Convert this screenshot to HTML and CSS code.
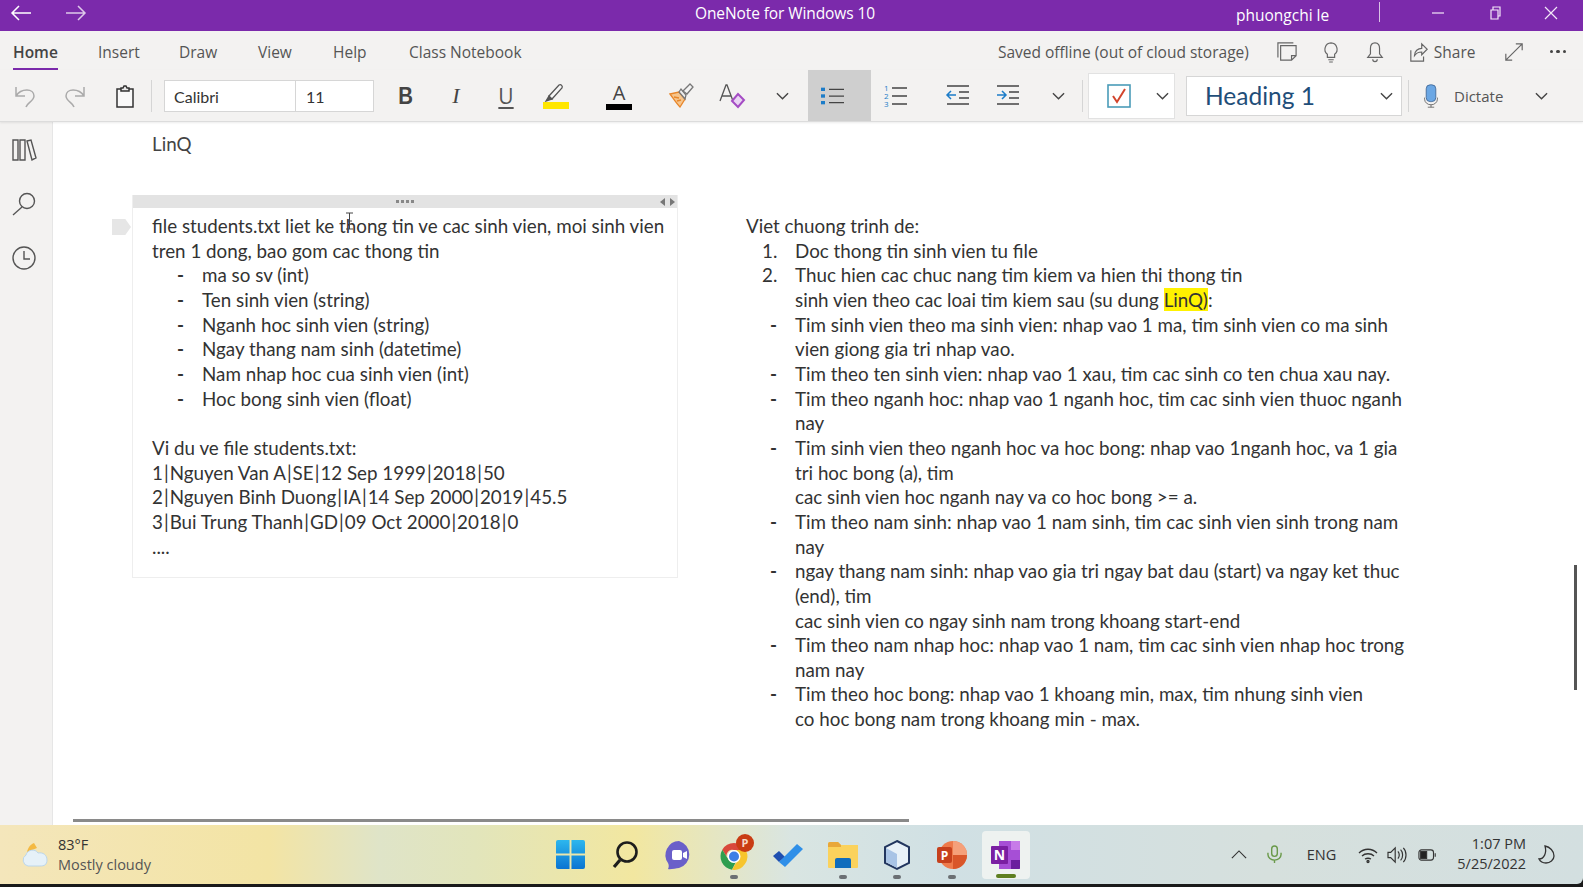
FILE: index.html
```html
<!DOCTYPE html>
<html lang="en">
<head>
<meta charset="utf-8">
<title>OneNote for Windows 10</title>
<link rel="stylesheet" href="styles.css">
</head>
<body>
<div class="app">
  <header class="titlebar">
    <div class="nav">
      <svg class="ic-nav" viewBox="0 0 22 16"><path d="M21 8H2M9 1 2 8l7 7"/></svg>
      <svg class="ic-nav dim" viewBox="0 0 22 16"><path d="M1 8h19M13 1l7 7-7 7"/></svg>
    </div>
    <div class="app-title">OneNote for Windows 10</div>
    <div class="user">phuongchi le</div>
    <div class="title-sep"></div>
    <div class="win-btns">
      <svg class="ic-win" viewBox="0 0 14 14"><path d="M1 7h12"/></svg>
      <svg class="ic-win" viewBox="0 0 14 14"><path d="M3 4h7v9H3zM5 4V1h7v9h-2"/></svg>
      <svg class="ic-win" viewBox="0 0 14 14"><path d="m1 1 12 12M13 1 1 13"/></svg>
    </div>
  </header>

  <nav class="tabrow">
    <a class="tab tab-home">Home</a>
    <a class="tab tab-insert">Insert</a>
    <a class="tab tab-draw">Draw</a>
    <a class="tab tab-view">View</a>
    <a class="tab tab-help">Help</a>
    <a class="tab tab-class">Class Notebook</a>
    <div class="tab-right">
      <span class="saved">Saved offline (out of cloud storage)</span>
      <svg class="ic-top" viewBox="0 0 22 24"><path d="M4 5h17v11l-5 5H4zM16 21v-5h5M1 18V2h17"/></svg>
      <svg class="ic-top" viewBox="0 0 22 24"><path d="M11 2a7 7 0 0 0-4 12.500V18h8v-3.500A7 7 0 0 0 11 2zM8 20.500h6M9 23h4"/></svg>
      <svg class="ic-top" viewBox="0 0 22 24"><path d="M11 2c-4 0-5 3-5 6v6l-3 4h16l-3-4V8c0-3-1-6-5-6zM8.500 20a2.500 2.500 0 0 0 5 0"/></svg>
      <span class="share"><svg class="ic-top ic-share" viewBox="0 0 22 24"><path d="M2 10v12h14v-5M6 16c0-5 4-8 8-8V3l6 6-6 6v-3c-4 0-6 1-8 4z"/></svg>Share</span>
      <svg class="ic-top ic-expand" viewBox="0 0 22 22"><path d="M2 20 20 2M13 2h7v7M2 13v7h7"/></svg>
      <span class="dots"><i></i><i></i><i></i></span>
    </div>
  </nav>

  <section class="ribbon">
    <span class="rb"><svg class="ic ic-soft" viewBox="0 0 24 24"><path d="M3 3v9h9M3 12C8 4 21 4 21 12c0 5-7 7-8 11"/></svg></span>
    <span class="rb"><svg class="ic ic-soft" viewBox="0 0 24 24"><path d="M21 3v9h-9M21 12C16 4 3 4 3 12c0 5 7 7 8 11"/></svg></span>
    <span class="rb"><svg class="ic ic-clip" viewBox="0 0 24 24"><path d="M4 5h16v18H4z" fill="#f9f9f9"/><path d="M8 7V4h2l1-2h2l1 2h2v3z" fill="#e9e9e9"/></svg></span>
    <span class="rsep"></span>
    <div class="fontbox"><span class="fname">Calibri</span><span class="fsize">11</span></div>
    <span class="rb rb-gap1"><b class="g-b">B</b></span>
    <span class="rb"><i class="g-i">I</i></span>
    <span class="rb"><span class="g-u">U</span></span>
    <span class="rb"><svg class="ic ic-wide" viewBox="0 0 26 26"><path d="m6 13 10-11c2-1 4 1 3 3L9 16H6z" fill="#f6f6f6"/><path d="m3 18 3-5 3 3z" fill="#555"/><rect x="0" y="19" width="26" height="7" fill="#ffe600" stroke="none"/></svg></span>
    <span class="rb rb-gap2"><span class="g-a">A</span></span>
    <span class="rb rb-gap2"><svg class="ic ic-wide" viewBox="0 0 26 26"><path d="m1 11 9-2 6 7-5 8C7 20 4 15 1 11z" fill="#f6c58c" stroke="#e8862a"/><path d="m5 14 5 1M8 18l4-1" stroke="#e8862a"/><path d="m10 9 2-3 5 6-1 4z" fill="#eee" stroke="#777"/><path d="m14 8 7-7 3 3-6 7z" fill="#f4f4f4" stroke="#777"/></svg></span>
    <span class="rb"><svg class="ic ic-wide" viewBox="0 0 26 26"><path d="m1 18 6-16h1l6 16M3 13h9"/><path d="m19 11 6 6-6 7-6-6z" fill="#e9d4f3" stroke="#a44cc4" stroke-width="2"/></svg></span>
    <span class="rb"><svg class="chev" viewBox="0 0 14 8"><path d="m1 1 6 6 6-6"/></svg></span>
    <span class="rb rb-active"><svg class="ic ic-list" viewBox="0 0 24 24" preserveAspectRatio="none"><rect x="0" y="2" width="4" height="4" fill="#1c7cc8" stroke="none"/><rect x="0" y="10" width="4" height="4" fill="#1c7cc8" stroke="none"/><rect x="0" y="18" width="4" height="4" fill="#1c7cc8" stroke="none"/><path d="M8 4h15M8 12h15M8 20h15"/></svg></span>
    <span class="rb rb-num"><svg class="ic ic-list" viewBox="0 0 24 24"><text x="0" y="7" class="numg">1</text><text x="0" y="15" class="numg">2</text><text x="0" y="23" class="numg">3</text><path d="M8 4h15M8 12h15M8 20h15"/></svg></span>
    <span class="rb rb-gap2"><svg class="ic ic-list" viewBox="0 0 24 24"><path d="M1 2h22M13 8h10M13 14h10M1 20h22"/><path d="M10 11H1M5 7l-4 4 4 4" stroke="#1c7cc8"/></svg></span>
    <span class="rb"><svg class="ic ic-list" viewBox="0 0 24 24"><path d="M1 2h22M13 8h10M13 14h10M1 20h22"/><path d="M1 11h9M6 7l4 4-4 4" stroke="#1c7cc8"/></svg></span>
    <span class="rb"><svg class="chev" viewBox="0 0 14 8"><path d="m1 1 6 6 6-6"/></svg></span>
    <span class="rsep rsep-b"></span>
    <div class="tagbox">
      <svg class="ic-check" viewBox="0 0 24 24"><rect x="1" y="1" width="22" height="22" fill="none" stroke="#4a9cb8" stroke-width="1.600"/><path d="m6 12 4 6 8-13" fill="none" stroke="#d2452c" stroke-width="2"/></svg>
      <svg class="chev" viewBox="0 0 14 8"><path d="m1 1 6 6 6-6"/></svg>
    </div>
    <div class="stylebox"><span class="stylename">Heading 1</span><svg class="chev" viewBox="0 0 14 8"><path d="m1 1 6 6 6-6"/></svg></div>
    <span class="rsep rsep-c"></span>
    <svg class="ic-mic" viewBox="0 0 20 30"><rect x="4" y="1" width="12" height="21" rx="5" fill="#6ba7e4" stroke="#39608f"/><path d="M2 17v2a8 7 0 0 0 16 0v-2M10 26v3M6 29h8" fill="none" stroke="#555"/></svg>
    <span class="dictate">Dictate</span>
    <svg class="chev chev-d" viewBox="0 0 14 8"><path d="m1 1 6 6 6-6"/></svg>
  </section>

  <main class="main">
    <aside class="rail">
      <svg class="ic-rail" viewBox="0 0 24 24"><path d="M1 2h5v20H1zM8 2h5v20H8zM15 3l4-1 5 18-4 2z"/></svg>
      <svg class="ic-rail" viewBox="0 0 24 24"><circle cx="15" cy="9" r="7.500"/><path d="M10 15 1 23"/></svg>
      <svg class="ic-rail" viewBox="0 0 24 24"><circle cx="12" cy="12" r="11"/><path d="M12 5v8h6"/></svg>
    </aside>
    <div class="canvas">
      <div class="page-title">LinQ</div>

      <article class="note note-left">
        <div class="note-head"><span class="grip"><i></i><i></i><i></i><i></i></span><span class="arrows"><i class="arr-l"></i><i class="arr-r"></i></span></div>
        <span class="flag"></span>
        <div class="note-body">
          <p>file students.txt liet ke thong tin ve cac sinh vien, moi sinh vien<br>tren 1 dong, bao gom cac thong tin</p>
          <ul class="dash dash-l">
            <li>ma so sv (int)</li>
            <li>Ten sinh vien (string)</li>
            <li>Nganh hoc sinh vien (string)</li>
            <li>Ngay thang nam sinh (datetime)</li>
            <li>Nam nhap hoc cua sinh vien (int)</li>
            <li>Hoc bong sinh vien (float)</li>
          </ul>
          <p class="blank">&nbsp;</p>
          <p>Vi du ve file students.txt:</p>
          <p>1<span class="pipe">|</span>Nguyen Van A<span class="pipe">|</span>SE<span class="pipe">|</span>12 Sep 1999<span class="pipe">|</span>2018<span class="pipe">|</span>50</p>
          <p>2<span class="pipe">|</span>Nguyen Binh Duong<span class="pipe">|</span>IA<span class="pipe">|</span>14 Sep 2000<span class="pipe">|</span>2019<span class="pipe">|</span>45.5</p>
          <p>3<span class="pipe">|</span>Bui Trung Thanh<span class="pipe">|</span>GD<span class="pipe">|</span>09 Oct 2000<span class="pipe">|</span>2018<span class="pipe">|</span>0</p>
          <p>....</p>
        </div>
        <svg class="ibeam" viewBox="0 0 9 18"><path d="M1 1h7M4.500 1v16M1 17h7M2 9h5"/></svg>
      </article>

      <article class="note-right">
        <p>Viet chuong trinh de:</p>
        <ol class="numlist">
          <li>Doc thong tin sinh vien tu file</li>
          <li>Thuc hien cac chuc nang tim kiem va hien thi thong tin<br>sinh vien theo cac loai tim kiem sau (su dung <mark>LinQ)</mark>:</li>
        </ol>
        <ul class="dash dash-r">
          <li>Tim sinh vien theo ma sinh vien: nhap vao 1 ma, tim sinh vien co ma sinh<br>vien giong gia tri nhap vao.</li>
          <li>Tim theo ten sinh vien: nhap vao 1 xau, tim cac sinh co ten chua xau nay.</li>
          <li>Tim theo nganh hoc: nhap vao 1 nganh hoc, tim cac sinh vien thuoc nganh<br>nay</li>
          <li>Tim sinh vien theo nganh hoc va hoc bong: nhap vao 1nganh hoc, va 1 gia<br>tri hoc bong (a), tim<br>cac sinh vien hoc nganh nay va co hoc bong &gt;= a.</li>
          <li>Tim theo nam sinh: nhap vao 1 nam sinh, tim cac sinh vien sinh trong nam<br>nay</li>
          <li>ngay thang nam sinh: nhap vao gia tri ngay bat dau (start) va ngay ket thuc<br>(end), tim<br>cac sinh vien co ngay sinh nam trong khoang start-end</li>
          <li>Tim theo nam nhap hoc: nhap vao 1 nam, tim cac sinh vien nhap hoc trong<br>nam nay</li>
          <li>Tim theo hoc bong: nhap vao 1 khoang min, max, tim nhung sinh vien<br>co hoc bong nam trong khoang min - max.</li>
        </ul>
      </article>

      <div class="hscroll"></div>
      <div class="vscroll"></div>
    </div>
  </main>

  <footer class="taskbar">
    <div class="weather">
      <svg class="ic-cloud" viewBox="0 0 28 26"><path d="M6 10C7 5 10 2 13 1l3 5z" fill="#f4b942"/><path d="M7 24a6 6 0 0 1-2-11c1-5 9-7 12-2 5-1 9 2 9 7s-3 6-7 6z" fill="#e6f1f8" stroke="#bcd6ea"/></svg>
      <div class="w-text"><div class="w-temp">83°F</div><div class="w-desc">Mostly cloudy</div></div>
    </div>
    <div class="tb-icons">
      <span class="tb"><svg class="tb-ic tb-win" viewBox="0 0 30 30"><defs><linearGradient id="winblue" x1="0" y1="0" x2="0" y2="1"><stop offset="0" stop-color="#2db7ee"/><stop offset="1" stop-color="#0a74d2"/></linearGradient></defs><path d="M0 2a2 2 0 0 1 2-2h12v14H0zM16 0h12a2 2 0 0 1 2 2v12H16zM0 16h14v14H2a2 2 0 0 1-2-2zM16 16h14v12a2 2 0 0 1-2 2H16z" fill="url(#winblue)"/></svg></span>
      <span class="tb"><svg class="tb-ic" viewBox="0 0 30 30"><circle cx="17" cy="12" r="9.500" fill="none" stroke="#1d1d1d" stroke-width="2.600"/><path d="m10 20-6 7" stroke="#1d1d1d" stroke-width="3.200"/></svg></span>
      <span class="tb"><svg class="tb-ic" viewBox="0 0 30 30"><path d="M15 1a14 14 0 0 1 0 27c-3 0-9 2-11 1 1-2 1-4 0-6A14 14 0 0 1 15 1z" fill="#6a5fc9"/><rect x="8" y="10" width="10" height="10" rx="2" fill="#fff"/><path d="m19 13 4-2v8l-4-2z" fill="#fff"/></svg></span>
      <span class="tb tb-on"><svg class="tb-chrome" viewBox="0 0 34 36"><path d="M14 9A13.500 13.500 0 0 0 2.300 15.700l6.700 11A6 6 0 0 1 14 16h11.700A13.500 13.500 0 0 0 14 9z" fill="#d9483b"/><path d="M2.300 15.700A13.500 13.500 0 0 0 12 35.800l4-8a6 6 0 0 1-7-1.200z" fill="#2f9e4f"/><path d="M25.700 16H14a6 6 0 0 1 3 11l-5 8.800a13.500 13.500 0 0 0 13.700-19.800z" fill="#f7c52d"/><circle cx="14" cy="22.500" r="6.500" fill="#fff"/><circle cx="14" cy="22.500" r="5" fill="#3d7fe6"/><circle cx="25" cy="9" r="9" fill="#c93c14"/><text x="25" y="13" class="badge-p">P</text></svg></span>
      <span class="tb"><svg class="tb-ic" viewBox="0 0 30 30"><path d="M0 16l6-5 6 6-6 5z" fill="#1f4fb0"/><path d="M6 22 24 4l6 5-18 18z" fill="#2f8fe8"/></svg></span>
      <span class="tb tb-on"><svg class="tb-ic" viewBox="0 0 30 30"><path d="M0 4a2 2 0 0 1 2-2h8l3 3h17v22a1 1 0 0 1-1 1H1a1 1 0 0 1-1-1z" fill="#fbd25c"/><path d="M0 4a2 2 0 0 1 2-2h8l3 3v2H0z" fill="#e9a73a"/><path d="M7 20a2 2 0 0 1 2-2h12a2 2 0 0 1 2 2v8H7z" fill="#0f6cbd"/></svg></span>
      <span class="tb tb-on"><svg class="tb-ic" viewBox="0 0 30 30"><path d="M15 1 27 7v16l-12 6-12-6V7z" fill="#e8f1f8" stroke="#22365f" stroke-width="2"/><path d="M15 14 4 8v14l11 6z" fill="#a9c4e6"/></svg></span>
      <span class="tb tb-on"><svg class="tb-ic" viewBox="0 0 30 30"><circle cx="16" cy="15" r="14" fill="#ee7a4b"/><path d="M16 1a14 14 0 0 1 14 14H16z" fill="#f5a07a"/><path d="M16 15h14a14 14 0 0 1-14 14z" fill="#d9562a"/><rect x="0" y="7" width="15" height="16" rx="2" fill="#c6401c"/><text x="7.500" y="20" class="badge-pp">P</text></svg></span>
      <span class="tb tb-one"><svg class="tb-ic" viewBox="0 0 30 30"><path d="M8 1h20a1 1 0 0 1 1 1v26a1 1 0 0 1-1 1H8z" fill="#a64fd6"/><path d="M20 1h8a1 1 0 0 1 1 1v8h-9z" fill="#c77be8"/><path d="M20 20h9v8a1 1 0 0 1-1 1h-8z" fill="#6a1f9e"/><rect x="0" y="6" width="17" height="18" rx="1" fill="#7a1fa2"/><text x="8.500" y="20" class="badge-n">N</text></svg></span>
    </div>
    <div class="tray">
      <svg class="tr-ic tr-up" viewBox="0 0 18 10"><path d="m1 9 8-8 8 8"/></svg>
      <svg class="tr-ic tr-mic" viewBox="0 0 16 20"><rect x="5" y="1" width="6" height="11" rx="3"/><path d="M1 8v2a7 6 0 0 0 14 0V8M8 16v3"/></svg>
      <span class="eng">ENG</span>
      <svg class="tr-ic tr-wifi" viewBox="0 0 20 16"><path d="M1 6c5-5 13-5 18 0M4 9c3-3 9-3 12 0M7 12c2-1 4-1 6 0"/><circle cx="10" cy="14.500" r="1"/></svg>
      <svg class="tr-ic tr-vol" viewBox="0 0 22 20"><path d="M1 7v6h3l5 5V2L4 7zM12 6c2 2 2 6 0 8M15 4c3 3 3 9 0 12M18 2c4 4 4 12 0 16"/></svg>
      <svg class="tr-ic tr-bat" viewBox="0 0 22 14"><rect x="1" y="1" width="17" height="12" rx="3"/><rect x="3" y="3" width="7" height="8" fill="#222"/><path d="M20 5v4"/></svg>
      <div class="clock"><div>1:07 PM</div><div>5/25/2022</div></div>
      <svg class="tr-ic tr-moon" viewBox="0 0 17 19"><path d="M7 1c5 1 9 5 9 10 0 4-4 7-8 7-3 0-6-2-7-4 5 0 8-6 6-13z"/></svg>
    </div>
  </footer>
</div>
</body>
</html>
```

FILE: styles.css
```css
* { box-sizing: border-box; }
html, body { margin: 0; padding: 0; }
body { width: 1583px; height: 887px; background: #1a1a1a; overflow: hidden; font-family: "Open Sans", "Liberation Sans", sans-serif; color: #333; }
.app { display: flex; flex-direction: column; width: 1583px; height: 884px; }
svg { display: block; flex: none; overflow: visible; }

/* title bar */
.titlebar { height: 31px; background: #7b2aab; color: #fff; display: flex; align-items: center; position: relative; font-size: 15.500px; }
.nav { display: flex; gap: 33px; padding-left: 10px; }
.ic-nav { width: 22px; height: 16px; fill: none; stroke: #fff; stroke-width: 1.500; margin-top: -6px; }
.ic-nav.dim { opacity: .75; }
.app-title { position: absolute; left: 695px; top: 2px; letter-spacing: -.1px; }
.user { margin-left: auto; width: 143px; margin-top: -2px; }
.title-sep { width: 1px; height: 20px; background: #d9c2e6; margin-top: -8px; }
.win-btns { display: flex; width: 203px; padding: 0 25px 6px 51px; justify-content: space-between; }
.ic-win { width: 14px; height: 14px; fill: none; stroke: #f3e8f8; stroke-width: 1.200; }

/* tab row */
.tabrow { height: 39px; background: #f3f2f1; display: flex; align-items: center; font-size: 15.500px; color: #555; position: relative; padding-top: 2px; }
.tab { width: auto; flex: none; }
.tab-home { margin-left: 13px; width: 85px; font-weight: 600; color: #444; position: relative; }
.tab-home::after { content: ""; position: absolute; left: 0; top: 27px; width: 45px; height: 4px; background: #7b2aab; }
.tab-insert { width: 81px; }
.tab-draw { width: 79px; }
.tab-view { width: 75px; }
.tab-help { width: 76px; }
.tab-right { margin-left: auto; display: flex; align-items: center; padding-right: 17px; }
.saved { margin-right: 28px; }
.ic-top { width: 20px; height: 22px; fill: none; stroke: #666; stroke-width: 1.300; margin-right: 24px; }
.share { display: flex; align-items: center; gap: 5px; margin-right: 28px; }
.ic-share { margin: 0; }
.ic-expand { width: 20px; height: 20px; margin-right: 26px; }
.dots { display: flex; gap: 3px; }
.dots i { width: 3.500px; height: 3.500px; border-radius: 50%; background: #444; }

/* ribbon */
.ribbon { height: 52px; background: #f3f2f1; border-bottom: 1px solid #dcdcdc; box-shadow: 0 1px 2px rgba(0,0,0,.08); display: flex; align-items: center; position: relative; z-index: 2; }
.rb { width: 50px; height: 51px; display: flex; align-items: center; justify-content: center; flex: none; color: #444; }
.rb-gap1 { margin-left: 7px; }
.rb-gap2 { margin-left: 13px; }
.rb-active { width: 63px; margin-left: 1px; background: #cfcfcf; padding-right: 14px; }
.rb-active .ic-list { height: 20px; }
.rb-num { width: 49px; }
.ic { width: 24px; height: 24px; fill: none; stroke: #555; stroke-width: 1.300; }
.ic-soft { stroke: #aaa; stroke-width: 1.500; }
.ic-clip { stroke: #333; stroke-width: 1.500; }
.ic-wide { width: 26px; height: 26px; }
.ic-list { stroke: #444; stroke-width: 1.500; }
.numg { font: 8px "Open Sans", sans-serif; fill: #1c7cc8; stroke: none; }
.chev { width: 13px; height: 8px; fill: none; stroke: #444; stroke-width: 1.500; }
.rsep { width: 1px; height: 32px; background: #d5d5d5; flex: none; margin-left: 1px; }
.rsep-b { margin-left: -1px; }
.rsep-c { margin-left: 6px; }
.fontbox { display: flex; margin-left: 12px; width: 210px; height: 32px; background: #fff; border: 1px solid #d6d6d6; font: 16px "Lato", sans-serif; color: #333; }
.fname { width: 131px; padding-left: 9px; line-height: 32px; border-right: 1px solid #d6d6d6; }
.fsize { padding-left: 10px; line-height: 32px; }
.g-b { font: 700 24px "Liberation Sans", sans-serif; transform: scaleX(.85); color: #444; }
.g-i { font: italic 22px "Liberation Serif", serif; color: #444; }
.g-u { font: 21px "Open Sans", sans-serif; color: #555; text-decoration: underline; text-underline-offset: 3px; }
.g-a { font: 20px "Open Sans", sans-serif; line-height: 22px; color: #444; border-bottom: 6px solid #000; width: 26px; text-align: center; }
.tagbox { margin-left: 5px; width: 87px; height: 46px; background: #fff; border: 1px solid #e2e2e2; display: flex; align-items: center; padding: 0 5px 0 18px; justify-content: space-between; flex: none; }
.ic-check { width: 24px; height: 24px; }
.stylebox { margin-left: 11px; width: 216px; height: 40px; background: #fff; border: 1px solid #d6d6d6; display: flex; align-items: center; justify-content: space-between; padding: 0 8px 0 18px; flex: none; }
.stylename { font: 24.500px "Lato", sans-serif; color: #1f4e79; }
.ic-mic { width: 16px; height: 24px; margin-left: 14px; }
.dictate { margin-left: 15px; font-size: 15px; color: #555; width: 66px; }
.chev-d { margin-left: 15px; }

/* main */
.main { flex: 1; display: flex; min-height: 0; }
.rail { width: 53px; flex: none; background: #f3f2f1; border-right: 1px solid #e6e6e6; display: flex; flex-direction: column; align-items: center; padding: 16px 5px 0 0; gap: 30px; }
.ic-rail { width: 24px; height: 24px; fill: none; stroke: #555; stroke-width: 1.400; }
.canvas { flex: 1; position: relative; background: #fff; font: 18.800px/24.650px "Lato", sans-serif; color: #333; }
.canvas p { margin: 0; white-space: nowrap; }
.page-title { position: absolute; left: 99px; top: 10px; color: #444; }
.note { position: absolute; left: 79px; top: 73px; width: 546px; height: 383px; border: 1px solid #eee; border-top: 0; }
.note-head { height: 13px; background: #e3e3e3; position: relative; display: flex; justify-content: center; align-items: center; }
.grip { display: flex; gap: 2px; }
.grip i { width: 3px; height: 3px; background: #888; }
.arrows { position: absolute; right: 2px; top: 3px; display: flex; gap: 5px; }
.arr-l, .arr-r { width: 0; height: 0; border-top: 4px solid transparent; border-bottom: 4px solid transparent; }
.arr-l { border-right: 5px solid #777; }
.arr-r { border-left: 5px solid #777; }
.flag { position: absolute; left: -21px; top: 24px; width: 19px; height: 16px; background: #e6e6e6; clip-path: polygon(0 0, 70% 0, 100% 50%, 70% 100%, 0 100%); }
.note-body { padding: 6px 0 0 19px; }
.pipe { margin: 0 1px; }
.dash, .numlist { list-style: none; margin: 0; padding: 0; white-space: nowrap; }
.dash-l li { padding-left: 50px; position: relative; }
.dash-l li::before { content: "-"; position: absolute; left: 25px; font-weight: 700; }
.ibeam { position: absolute; left: 212px; top: 17px; width: 9px; height: 18px; fill: none; stroke: #444; stroke-width: 1; }
.note-right { position: absolute; left: 693px; top: 92px; width: 700px; }
.numlist { counter-reset: n; }
.numlist li { counter-increment: n; padding-left: 49px; position: relative; }
.numlist li::before { content: counter(n) "."; position: absolute; left: 16px; }
.dash-r li { padding-left: 49px; position: relative; }
.dash-r li::before { content: "-"; position: absolute; left: 24px; font-weight: 700; }
mark { background: #fff200; color: #333; }
.hscroll { position: absolute; left: 20px; top: 697px; width: 836px; height: 3px; background: #8a8a8a; }
.vscroll { position: absolute; left: 1521px; top: 443px; width: 3px; height: 125px; background: #555; }

/* taskbar */
.taskbar { height: 59px; display: flex; align-items: center; position: relative; border-bottom-right-radius: 6px;
  background: linear-gradient(90deg, #f4e6bb 0, #f3e4a4 17%, #dfe4c8 24%, #e2e5bb 30%, #f2e7a0 40%, #d9e5e2 50%, #d0e0e4 60%, #d6e0dd 80%, #d3dfe0 100%); }
.weather { width: 543px; display: flex; align-items: center; padding-left: 21px; flex: none; }
.ic-cloud { width: 28px; height: 26px; margin-right: 9px; }
.w-temp { font-size: 14.500px; line-height: 20px; color: #333; }
.w-desc { font-size: 14.500px; line-height: 20px; color: #555; }
.tb-icons { display: flex; }
.tb { width: 54.500px; height: 48px; display: flex; align-items: center; justify-content: center; position: relative; }
.tb-ic { width: 30px; height: 30px; }
.tb-win { width: 29px; height: 29px; }
.tb-chrome { width: 34px; height: 36px; margin: -6px 0 0 7px; }
.tb-on::after { content: ""; position: absolute; bottom: 0; left: 23px; width: 8px; height: 3.500px; border-radius: 2px; background: #6b6f73; }
.tb-one { width: 48px; margin: 0 3.250px; background: #eef2f0; border-radius: 4px; }
.tb-one::after { content: ""; position: absolute; bottom: 1px; left: 14px; width: 20px; height: 4px; border-radius: 2px; background: #5e7f20; }
.badge-p { font: 700 11px "Open Sans", sans-serif; fill: #f7d9c8; text-anchor: middle; }
.badge-pp { font: 700 12px "Open Sans", sans-serif; fill: #fff; text-anchor: middle; }
.badge-n { font: 700 14px "Open Sans", sans-serif; fill: #fff; text-anchor: middle; }
.tray { margin-left: auto; display: flex; align-items: center; padding-right: 28px; }
.tr-ic { fill: none; stroke: #333; stroke-width: 1.300; }
.tr-up { width: 16px; height: 9px; margin-right: 20px; }
.tr-mic { width: 15px; height: 19px; stroke: #6a9a4a; stroke-width: 1.500; margin-right: 25px; }
.eng { font-size: 14.500px; color: #333; margin-right: 22px; }
.tr-wifi { width: 20px; height: 16px; margin-right: 9px; }
.tr-vol { width: 20px; height: 18px; margin-right: 11px; }
.tr-bat { width: 19px; height: 12px; margin-right: 20px; }
.clock { font-size: 14.500px; line-height: 20px; text-align: right; color: #333; margin: -2px 12px 0 0; }
.tr-moon { width: 17px; height: 19px; }
```
